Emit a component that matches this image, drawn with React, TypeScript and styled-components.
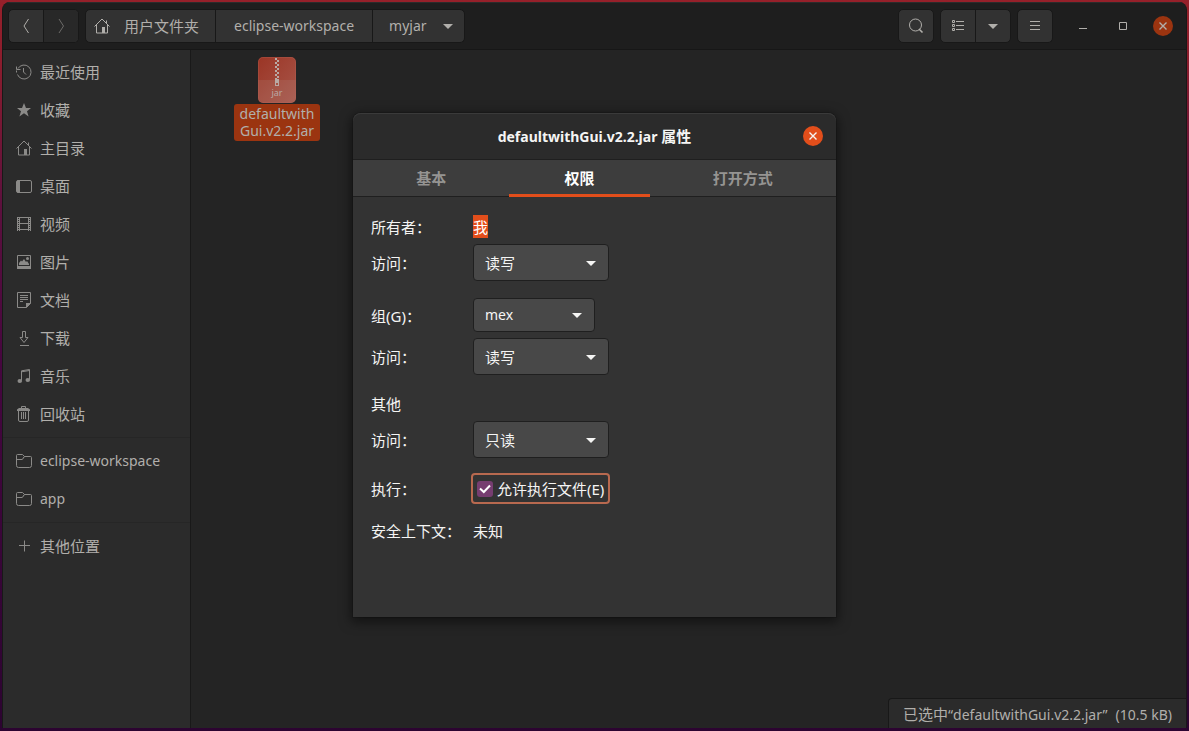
import React, { useState } from "react";
import styled, { createGlobalStyle, css } from "styled-components";

const GlobalStyle = createGlobalStyle`
  *, *::before, *::after { box-sizing: border-box; }
  body {
    margin: 0;
    font-family: "Noto Sans", "Noto Sans CJK SC", sans-serif;
    font-size: 15px;
    line-height: 22px;
    color: #b1afab;
    background: #2c0431;
  }
  button, select, input { font: inherit; color: inherit; margin: 0; }
  button { padding: 0; border: 0; background: none; }
  svg { display: block; flex: none; }
`;

const Desktop = styled.div`
  position: relative;
  display: flex;
  min-height: 100vh;
  padding: 2px 2px 3px;
  background: linear-gradient(180deg, #96202a 0, #8c1d2d 8%, #5c103d 28%, #45063f 50%, #2c0431 100%);
`;

const Window = styled.div`
  flex: 1;
  display: flex;
  flex-direction: column;
  border: 1px solid #181818;
  border-width: 0 1px;
  border-radius: 8px 8px 0 0;
  background: #242424;
  overflow: hidden;
`;

const HeaderBar = styled.header`
  display: flex;
  align-items: center;
  gap: 6px;
  height: 48px;
  padding: 0 13px 0 5px;
  border-top: 1px solid #2b2b2b;
  border-bottom: 1px solid #171717;
  background: #1e1e1e;
`;

const ButtonGroup = styled.div`
  display: flex;
  height: 34px;
  border: 1px solid #181818;
  border-radius: 5px;
  background: #323232;
  overflow: hidden;
`;

const HeaderButton = styled.button<{ $dim?: boolean }>`
  display: flex;
  align-items: center;
  justify-content: center;
  width: 34px;
  & + & { width: 35px; border-left: 1px solid #181818; }
  ${(p) => p.$dim && css`background: #282828; color: #6c6b69;`}
`;

const Crumb = styled.button<{ $latin?: boolean }>`
  display: flex;
  align-items: center;
  gap: 14px;
  padding: 0 18px;
  font-size: ${(p) => (p.$latin ? "14px" : "15px")};
  & + & { border-left: 1px solid #181818; }
  &:first-child { padding: 0 16px 0 8px; }
  &:last-child { padding: 0 11px 0 16px; gap: 16px; }
`;

const Spacer = styled.div`
  flex: 1;
`;

const WindowControls = styled.div`
  display: flex;
  align-items: center;
  gap: 20px;
  margin-left: 14px;
`;

const ControlButton = styled.button<{ $fill?: string }>`
  display: flex;
  align-items: center;
  justify-content: center;
  width: 20px;
  height: 20px;
  border-radius: 50%;
  background: ${(p) => p.$fill ?? "transparent"};
`;

const Body = styled.div`
  flex: 1;
  display: flex;
`;

const Sidebar = styled.nav`
  width: 188px;
  padding-top: 3px;
  border-right: 1px solid #191919;
  background: #2b2b2b;
`;

const PlaceList = styled.ul`
  margin: 0;
  padding: 0;
  list-style: none;
  & + & {
    margin-top: 4px;
    padding-top: 4px;
    border-top: 1px solid #262626;
  }
`;

const Place = styled.a<{ $latin?: boolean }>`
  display: flex;
  align-items: center;
  gap: 8px;
  height: 38px;
  padding-left: 13px;
  color: inherit;
  font-size: ${(p) => (p.$latin ? "14px" : "15px")};
  text-decoration: none;
  svg { color: #8b8a88; }
`;

const Files = styled.main`
  position: relative;
  flex: 1;
  padding: 7px 43px;
`;

const FileItem = styled.figure`
  display: flex;
  flex-direction: column;
  align-items: center;
  gap: 1px;
  width: 86px;
  margin: 0;
`;

const FileName = styled.figcaption`
  width: 100%;
  padding: 1px 4px 2px;
  border-radius: 3px;
  background: #9b3410;
  font-size: 14px;
  line-height: 17px;
  text-align: center;
`;

const StatusBar = styled.div`
  position: absolute;
  right: 0;
  bottom: 0;
  display: flex;
  align-items: center;
  gap: 8px;
  padding: 4px 14px 2px;
  border: 1px solid #181818;
  border-width: 1px 0 0 1px;
  border-radius: 4px 0 0 0;
  background: #2b2b2b;
`;

const Latin = styled.span`
  font-size: 14px;
`;

const DialogLayer = styled.div`
  position: absolute;
  inset: 0;
  display: flex;
  justify-content: center;
  align-items: flex-start;
  padding-top: 113px;
`;

const Dialog = styled.section`
  width: 483px;
  padding-bottom: 75px;
  border-radius: 8px 8px 0 0;
  background: #333333;
  color: #f5f5f4;
  box-shadow: 0 3px 12px 2px rgba(0, 0, 0, 0.5), 0 0 0 1px #1f1f1f;
`;

const DialogHeader = styled.header`
  display: grid;
  grid-template-columns: 1fr auto 1fr;
  align-items: center;
  height: 47px;
  padding: 0 13px;
  border-bottom: 1px solid #1f1f1f;
  border-radius: 8px 8px 0 0;
  background: #2b2b2b;
  box-shadow: inset 0 1px 0 #3a3a3a;
  ${ControlButton} { justify-self: end; }
`;

const DialogTitle = styled.h1`
  grid-column: 2;
  margin: 0;
  font-size: 15px;
  font-weight: 700;
`;

const Tabs = styled.div`
  display: flex;
  gap: 8px;
  height: 37px;
  padding: 0 8px;
  border-bottom: 1px solid #1f1f1f;
  background: #3d3d3d;
`;

const Tab = styled.button<{ $active: boolean }>`
  flex: 1 1 auto;
  height: 37px;
  border-bottom: 3px solid ${(p) => (p.$active ? "#e24e1b" : "transparent")};
  padding-top: 2px;
  font-weight: 700;
  color: ${(p) => (p.$active ? "#ffffff" : "#959492")};
`;

const Form = styled.form`
  display: flex;
  flex-direction: column;
  gap: 17px;
  padding: 18px 18px 0;
`;

const Group = styled.div`
  display: grid;
  grid-template-columns: 102px 1fr;
  align-items: center;
  justify-items: start;
  row-gap: 6px;
  line-height: 21px;
`;

const Caption = styled.label`
  padding-top: 2px;
`;

const Value = styled.span`
  padding-top: 2px;
`;

const SelectedValue = styled(Value)`
  background: #e24e1b;
  color: #ffffff;
`;

const SelectBox = styled.div<{ $compact?: boolean }>`
  position: relative;
  width: ${(p) => (p.$compact ? "122px" : "136px")};
  select {
    appearance: none;
    display: block;
    width: 100%;
    height: ${(p) => (p.$compact ? "34px" : "37px")};
    padding: ${(p) => (p.$compact ? "0 32px 2px 11px" : "2px 32px 0 11px")};
    border: 1px solid #1f1f1f;
    border-radius: 4px;
    background: #484848;
    font-size: ${(p) => (p.$compact ? "14px" : "15px")};
  }
  svg {
    position: absolute;
    top: 50%;
    right: 13px;
    margin-top: -2px;
    pointer-events: none;
  }
`;

const CheckLabel = styled.label`
  display: flex;
  align-items: center;
  gap: 4px;
  height: 27px;
  padding: 0 4px;
  border-radius: 2px;
  outline: 2px solid #b8694f;
`;

const CheckBox = styled.span`
  display: grid;
  width: 16px;
  height: 16px;
  input, svg { grid-area: 1 / 1; }
  input {
    appearance: none;
    width: 16px;
    height: 16px;
    border-radius: 3px;
    background: #4f4f4f;
    outline: none;
  }
  input:checked { background: #763d70; }
  svg { pointer-events: none; visibility: hidden; }
  input:checked + svg { visibility: visible; }
`;

type IconProps = { children: React.ReactNode };

const Icon = ({ children }: IconProps) => (
  <svg width="16" height="16" viewBox="0 0 16 16" fill="none" stroke="currentColor" aria-hidden="true">
    {children}
  </svg>
);

const Caret = () => (
  <svg width="10" height="5" viewBox="0 0 10 5" fill="currentColor" aria-hidden="true">
    <path d="M0 0h10L5 5z" />
  </svg>
);

const CloseGlyph = () => (
  <svg width="8" height="8" viewBox="0 0 8 8" stroke="currentColor" strokeWidth="1.4" aria-hidden="true">
    <path d="M0.5 0.5l7 7M7.5 0.5l-7 7" />
  </svg>
);

const HomeIcon = () => (
  <Icon>
    <path d="M0.5 8.5L8 1l7.500 7.500M12.500 2.500V5M2.500 7v8H13.500V7" />
    <path d="M8 9h3v6H8z" fill="currentColor" stroke="none" />
  </Icon>
);

const FolderIcon = () => (
  <Icon>
    <path d="M.5 12.500v-10a1 1 0 0 1 1-1h5l2 2h6a1 1 0 0 1 1 1v8a2 2 0 0 1-2 2h-11a2 2 0 0 1-2-2zM.5 6.500h5.500c1.500 0 1-3 3-3" />
  </Icon>
);

const icons = {
  recent: (
    <Icon>
      <path d="M2 4.500A7 7 0 1 1 1.500 10.500M.500 8.500v-2M.500 2.500v3h4M7.500 4v4l2.500 2.500" />
    </Icon>
  ),
  star: (
    <Icon>
      <path d="M8 1l2 5h5l-4 3.200L12.600 14.500 8 11.300 3.400 14.500 5 9.200 1 6h5z" fill="currentColor" stroke="none" />
    </Icon>
  ),
  home: <HomeIcon />,
  desktop: (
    <Icon>
      <rect x=".5" y="2.500" width="15" height="12" rx="1.500" />
      <path d="M1 2.500h3v12H1z" fill="currentColor" stroke="none" />
    </Icon>
  ),
  video: (
    <Icon>
      <path d="M1.500 1v14M14.500 1v14M3.500 1v14M12.500 1v14M3.500 1.500h9M3.500 7.500h9M3.500 13.500h9" />
      <path d="M2.500 1v14M13.500 1v14" strokeDasharray="1 1" />
    </Icon>
  ),
  picture: (
    <Icon>
      <path d="M1.500 1.500h13v12h-13z" />
      <path d="M1 12h14v3H1zM3 11V9l2-2.500L6 7.500 8 5l2 3 1-1 2 3v1z" fill="currentColor" stroke="none" />
      <circle cx="11.500" cy="4.500" r="1.500" fill="currentColor" stroke="none" />
    </Icon>
  ),
  document: (
    <Icon>
      <path d="M1.500.5h13v11l-4 4h-9zM4 3.500h8M4 5.500h8M4 7.500h8M4 9.500h3" />
      <path d="M10 11h5l-5 5z" fill="currentColor" stroke="none" />
    </Icon>
  ),
  download: (
    <Icon>
      <path d="M6.500 1.500h3v6h2.500l-4 5-4-5h2.500zM4 15.500h9" />
    </Icon>
  ),
  music: (
    <Icon>
      <path d="M5.500 12.500V2.800L13.500 1.500V11.500M5.500 3.800l8-1.300" />
      <ellipse cx="3.800" cy="13" rx="2.300" ry="2" fill="currentColor" stroke="none" />
      <ellipse cx="11.800" cy="12" rx="2.300" ry="2" fill="currentColor" stroke="none" />
    </Icon>
  ),
  trash: (
    <Icon>
      <path d="M2.500 5v9a1.500 1.500 0 0 0 1.500 1.500h7a1.500 1.500 0 0 0 1.500-1.500V5M5.500 6v7M7.500 6v7M9.500 6v7M5.500 2.500v-2h4v2" />
      <path d="M1 5V3.500L3 2h9l2 1.500V5z" fill="currentColor" stroke="none" />
    </Icon>
  ),
  folder: <FolderIcon />,
  plus: (
    <Icon>
      <path d="M8.500 2.500v11M3 7.500h11" />
    </Icon>
  ),
};

type PlaceEntry = { icon: keyof typeof icons; label: string; latin?: boolean };

const placeGroups: PlaceEntry[][] = [
  [
    { icon: "recent", label: "最近使用" },
    { icon: "star", label: "收藏" },
    { icon: "home", label: "主目录" },
    { icon: "desktop", label: "桌面" },
    { icon: "video", label: "视频" },
    { icon: "picture", label: "图片" },
    { icon: "document", label: "文档" },
    { icon: "download", label: "下载" },
    { icon: "music", label: "音乐" },
    { icon: "trash", label: "回收站" },
  ],
  [
    { icon: "folder", label: "eclipse-workspace", latin: true },
    { icon: "folder", label: "app", latin: true },
  ],
  [{ icon: "plus", label: "其他位置" }],
];

const JarIcon = () => (
  <svg width="38" height="46" viewBox="0 0 38 46" role="img" aria-label="jar">
    <defs>
      <linearGradient id="jar" x1="0" y1="0" x2="1" y2="1">
        <stop offset="0" stopColor="#9b3525" />
        <stop offset="1" stopColor="#a8564a" />
      </linearGradient>
    </defs>
    <rect width="38" height="46" rx="5" fill="url(#jar)" />
    <path d="M0 23h38v18a5 5 0 0 1-5 5H5a5 5 0 0 1-5-5z" fill="#b5aaa5" fillOpacity=".14" />
    <rect x=".5" y=".5" width="37" height="45" rx="4.500" fill="none" stroke="#b5675b" strokeOpacity=".3" />
    <path d="M18 1v21" stroke="#b9aaa5" strokeWidth="2" strokeDasharray="2 2" />
    <path d="M20 3v19" stroke="#b9aaa5" strokeWidth="2" strokeDasharray="2 2" />
    <path d="M17 22h4v7h-4zM18 26v2h2v-2z" fill="#b9aaa5" fillRule="evenodd" />
    <text x="19" y="39" textAnchor="middle" fontSize="9" fill="#b9aaa5">jar</text>
  </svg>
);

type PickerProps = { id: string; options: string[]; compact?: boolean };

const Picker = ({ id, options, compact }: PickerProps) => (
  <SelectBox $compact={compact}>
    <select id={id} defaultValue={options[0]}>
      {options.map((o) => (
        <option key={o}>{o}</option>
      ))}
    </select>
    <Caret />
  </SelectBox>
);

const tabs = ["基本", "权限", "打开方式"];

function PropertiesDialog() {
  const [active, setActive] = useState("权限");
  const [executable, setExecutable] = useState(true);
  return (
    <Dialog role="dialog" aria-labelledby="dialog-title">
      <DialogHeader>
        <DialogTitle id="dialog-title">
          <Latin>defaultwithGui.v2.2.jar</Latin> 属性
        </DialogTitle>
        <ControlButton $fill="#e24e1b" aria-label="关闭">
          <CloseGlyph />
        </ControlButton>
      </DialogHeader>
      <Tabs role="tablist">
        {tabs.map((t) => (
          <Tab key={t} role="tab" aria-selected={t === active} $active={t === active} onClick={() => setActive(t)}>
            {t}
          </Tab>
        ))}
      </Tabs>
      <Form>
        <Group>
          <Value>所有者：</Value>
          <SelectedValue>我</SelectedValue>
          <Caption htmlFor="owner-access">访问：</Caption>
          <Picker id="owner-access" options={["读写", "只读"]} />
        </Group>
        <Group>
          <Caption htmlFor="group">组(G)：</Caption>
          <Picker id="group" options={["mex"]} compact />
          <Caption htmlFor="group-access">访问：</Caption>
          <Picker id="group-access" options={["读写", "只读", "无"]} />
        </Group>
        <Group>
          <Value>其他</Value>
          <span />
          <Caption htmlFor="other-access">访问：</Caption>
          <Picker id="other-access" options={["只读", "读写", "无"]} />
        </Group>
        <Group>
          <Value>执行：</Value>
          <CheckLabel>
            <CheckBox>
              <input type="checkbox" checked={executable} onChange={(e) => setExecutable(e.target.checked)} />
              <svg width="16" height="16" viewBox="0 0 16 16" fill="none" stroke="#fff" strokeWidth="2" aria-hidden="true">
                <path d="M3 7.500l3.800 3.500L13 4.500" />
              </svg>
            </CheckBox>
            <Value>允许执行文件(E)</Value>
          </CheckLabel>
        </Group>
        <Group>
          <Value>安全上下文：</Value>
          <Value>未知</Value>
        </Group>
      </Form>
    </Dialog>
  );
}

export default function App() {
  return (
    <>
      <GlobalStyle />
      <Desktop>
        <Window>
          <HeaderBar>
            <ButtonGroup>
              <HeaderButton aria-label="后退">
                <Icon><path d="M10.500 1L6 8l4.500 7" /></Icon>
              </HeaderButton>
              <HeaderButton aria-label="前进" $dim>
                <Icon><path d="M6 1l4.500 7L6 15" /></Icon>
              </HeaderButton>
            </ButtonGroup>
            <ButtonGroup>
              <Crumb><HomeIcon />用户文件夹</Crumb>
              <Crumb $latin>eclipse-workspace</Crumb>
              <Crumb $latin>myjar<Caret /></Crumb>
            </ButtonGroup>
            <Spacer />
            <ButtonGroup>
              <HeaderButton aria-label="搜索">
                <Icon>
                  <circle cx="7.500" cy="7" r="6" />
                  <path d="M11 11l3.500 3.500" strokeWidth="1.600" />
                </Icon>
              </HeaderButton>
            </ButtonGroup>
            <ButtonGroup>
              <HeaderButton aria-label="列表视图">
                <Icon>
                  <path d="M2.500 2.500h2v2h-2zM2.500 6.500h2v2h-2zM2.500 10.500h2v2h-2zM6 3.500h8M6 7.500h8M6 11.500h8" />
                </Icon>
              </HeaderButton>
              <HeaderButton aria-label="视图选项"><Caret /></HeaderButton>
            </ButtonGroup>
            <ButtonGroup>
              <HeaderButton aria-label="菜单">
                <Icon><path d="M3 3.500h10M3 7.500h10M3 11.500h10" /></Icon>
              </HeaderButton>
            </ButtonGroup>
            <WindowControls>
              <ControlButton aria-label="最小化">
                <Icon><path d="M4 10.500h8" /></Icon>
              </ControlButton>
              <ControlButton aria-label="最大化">
                <Icon><path d="M4.500 4.500h7v7h-7z" /></Icon>
              </ControlButton>
              <ControlButton aria-label="关闭窗口" $fill="#9b3410">
                <CloseGlyph />
              </ControlButton>
            </WindowControls>
          </HeaderBar>
          <Body>
            <Sidebar>
              {placeGroups.map((group, i) => (
                <PlaceList key={i}>
                  {group.map((p) => (
                    <li key={p.label}>
                      <Place href="#" $latin={p.latin}>
                        {icons[p.icon]}
                        {p.label}
                      </Place>
                    </li>
                  ))}
                </PlaceList>
              ))}
            </Sidebar>
            <Files>
              <FileItem>
                <JarIcon />
                <FileName>defaultwith<br />Gui.v2.2.jar</FileName>
              </FileItem>
              <StatusBar>
                <span>已选中<Latin>“defaultwithGui.v2.2.jar”</Latin></span>
                <Latin>(10.5 kB)</Latin>
              </StatusBar>
            </Files>
          </Body>
        </Window>
        <DialogLayer>
          <PropertiesDialog />
        </DialogLayer>
      </Desktop>
    </>
  );
}
